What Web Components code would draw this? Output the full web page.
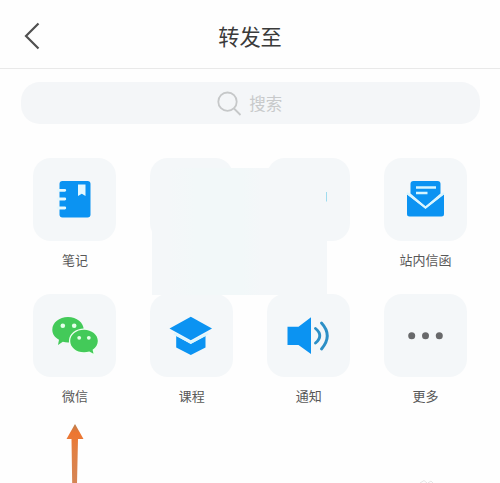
<!DOCTYPE html>
<html lang="zh-CN">
<head>
<meta charset="utf-8">
<title>转发至</title>
<style>
html,body{margin:0;height:100%;background:#fefefe;overflow:hidden}
body{font-family:"Noto Sans CJK SC","Noto Sans",sans-serif;color:#444}
</style>
</head>
<body>
<share-page></share-page>
<script>
const define = (name, html) => customElements.define(name, class extends HTMLElement {
  constructor() {
    super();
    const t = document.createElement('template');
    t.innerHTML = html;
    this.attachShadow({mode: 'open'}).append(t.content.cloneNode(true));
  }
});

define('page-header', `<style>
:host{display:grid;grid-template-columns:1fr auto 1fr;align-items:center;height:68px;border-bottom:1px solid #e9e9e9;box-sizing:content-box}
svg{display:block;margin:3px 0 0 22px}
h1{margin:3px 0 0;font-size:21.2px;line-height:30px;font-weight:400;color:#3a3a3a}
</style>
<svg width="24" height="30" viewBox="0 0 24 30"><path d="M16.5 2.500 4 15 16.500 27.500" fill="none" stroke="#505050" stroke-width="2.200"/></svg>
<h1><slot></slot></h1><span></span>`);

define('search-box', `<style>
:host{display:flex;align-items:center;justify-content:center;gap:7px;height:42px;margin:13px 20px 0 21px;border-radius:19px;background:#f4f6f8;color:#c8cacb;font-size:16.5px;line-height:24px}
svg{display:block}
div{display:flex;align-items:center;gap:7px;margin-right:1.500px}
</style>
<div><svg width="25" height="25" viewBox="0 0 25 25"><circle cx="10.500" cy="10.700" r="9.200" fill="none" stroke="#c6c8c9" stroke-width="1.800"/><path d="M17 17.500 23.500 24" stroke="#c6c8c9" stroke-width="1.800"/></svg>
<span><slot></slot></span></div>`);

define('share-item', `<style>
:host{display:flex;flex-direction:column;align-items:center;font-size:13px;line-height:20px;color:#585858}
.tile{width:83px;height:83px;border-radius:18px;background:#f4f7f9;margin-bottom:9px}
::slotted(svg){display:block;width:83px;height:83px}
</style>
<div class="tile"><slot name="icon"></slot></div><span><slot></slot></span>`);

define('cover-patch', `<style>
:host{display:block;width:175px;height:127px;background:linear-gradient(90deg,#f4f7f9 0 10%,#f2f8f9 25% 52%,#f4f7f9 62%)}
svg{display:block;width:100%;height:100%}
</style><svg viewBox="0 0 175 127"><path d="M174.500 24v9.500" stroke="#9fdcef" stroke-width="1"/></svg>`);

define('pointer-arrow', `<style>:host{display:block}svg{display:block}</style>
<svg width="18" height="60" viewBox="0 0 18 60"><defs><linearGradient id="g" x2="0" y2="1"><stop offset="0" stop-color="#b88052"/><stop offset=".15" stop-color="#ee7630"/><stop offset=".45" stop-color="#e18044"/><stop offset="1" stop-color="#d48555"/></linearGradient></defs><path d="M9 0 17.500 15H12L11 60H6.200L5.500 15H.5Z" fill="url(#g)"/></svg>`);

define('share-page', `<style>
:host{display:block;position:relative;width:500px;height:483px;overflow:hidden}
main{display:grid;grid-template-columns:repeat(4,1fr);row-gap:24.300px;padding:33.700px 16px 0 16.500px}
share-item{height:112px}
cover-patch{position:absolute;left:152px;top:168px}
pointer-arrow{position:absolute;left:66px;top:424px}
.mark{position:absolute;left:419px;top:480px}
</style>
<page-header>转发至</page-header>
<search-box>搜索</search-box>
<main>
<share-item><svg slot="icon" viewBox="0 0 83 83"><rect x="26.500" y="23" width="31" height="36.500" rx="3" fill="#0b93f2"/><path d="M25 32.300h6.800M25 41h6.800M25 50h6.800" stroke="#e6f8fd" stroke-width="2.800" stroke-linecap="round"/><path d="M45 26.500h7.500v11.500l-3.700-2.300L45 38Z" fill="#e3f8ff"/></svg>笔记</share-item>
<share-item></share-item>
<share-item></share-item>
<share-item><svg slot="icon" viewBox="0 0 83 83"><path d="M26.500 35.500V26a3 3 0 0 1 3-3h24a3 3 0 0 1 3 3v9.500L41.500 48.500Z" fill="#0b93f2"/><path d="M32 29.500h20M32 35h11.500" stroke="#d5f5ff" stroke-width="2.300"/><path d="M23 36.500 41.500 50.500 60 36.500V56a2.500 2.500 0 0 1-2.500 2.500h-32A2.500 2.500 0 0 1 23 56Z" fill="#0b93f2"/><path d="M23 35 41.500 49.500 60 35" fill="none" stroke="#d9f6ff" stroke-width="2.200"/></svg>站内信函</share-item>
<share-item><svg slot="icon" viewBox="0 0 83 83"><path d="M35 23c8.800 0 15.700 5.600 15.700 12.700S43.800 48.500 35 48.500c-1.800 0-3.500-.2-5.200-.7L25 51l1-5.200c-4.200-2.600-6.700-5.800-6.700-10.100C19.300 28.600 26.200 23 35 23Z" fill="#43ca59"/><circle cx="29.800" cy="31.800" r="2.300" fill="#e4ffe9"/><circle cx="41.200" cy="31.800" r="2.300" fill="#e4ffe9"/><path d="M51 35.800c7.700 0 13.800 5 13.800 11.200 0 3.600-2 6.700-5.200 8.800l.9 4-4.200-2.200c-1.700.4-3.500.7-5.300.7-7.700 0-13.800-5-13.800-11.300s6.100-11.200 13.800-11.200Z" fill="#43ca59" stroke="#effff2" stroke-width="2.600" paint-order="stroke"/><circle cx="46.200" cy="43.800" r="1.900" fill="#e4ffe9"/><circle cx="55.800" cy="43.800" r="1.900" fill="#e4ffe9"/></svg>微信</share-item>
<share-item><svg slot="icon" viewBox="0 0 83 83"><path d="M40.800 22.800 62 34.500 40.800 46.300 19.500 34.500Z" fill="#0b93f2"/><path d="M26.200 42 40.800 50 55.500 42V53.500L40.800 61 26.200 53.500Z" fill="#0b93f2"/><path d="M24 39.500 40.800 48.500 58 39.500" fill="none" stroke="#dcf7ff" stroke-width="2"/></svg>课程</share-item>
<share-item><svg slot="icon" viewBox="0 0 83 83"><path d="M20.500 32.800H31.500L44 23.200V60L31.500 51H20.500Z" fill="#0b93f2"/><path d="M48.500 34.500Q57 41.500 48.500 49M54.500 29Q66 41.500 54.500 55" fill="none" stroke="#2c8fc6" stroke-width="2.900" stroke-linecap="round"/></svg>通知</share-item>
<share-item><svg slot="icon" viewBox="0 0 83 83"><g fill="#68696b"><circle cx="27.700" cy="41.700" r="3.500"/><circle cx="41.500" cy="41.700" r="3.500"/><circle cx="55.300" cy="41.700" r="3.500"/></g></svg>更多</share-item>
</main>
<cover-patch></cover-patch>
<pointer-arrow></pointer-arrow>
<svg class="mark" width="16" height="3"><path d="M1 3 5 .5 8 3M9 3l3-2 2 2" fill="none" stroke="#e5e5e5"/></svg>`);
</script>
</body>
</html>
